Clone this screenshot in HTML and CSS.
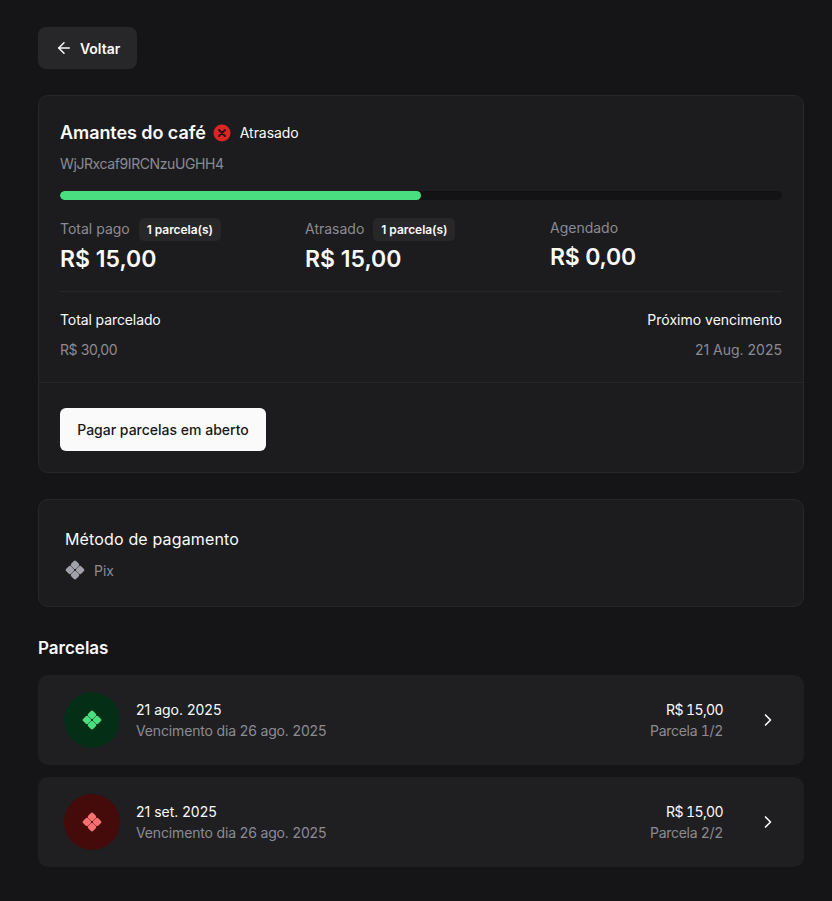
FILE: index.html
```html
<!DOCTYPE html>
<html lang="pt-BR">
<head>
  <meta charset="UTF-8">
  <title>Amantes do café</title>
  <link rel="stylesheet" href="styles.css">
</head>
<body>
<svg class="defs" width="0" height="0">
  <symbol id="pix" viewBox="0 0 20 20">
    <rect x="6.5" y="1.4" width="7" height="7" rx="1.9" transform="rotate(45 10 4.9)"/>
    <rect x="6.5" y="11.6" width="7" height="7" rx="1.9" transform="rotate(45 10 15.1)"/>
    <rect x="1.4" y="6.5" width="7" height="7" rx="1.9" transform="rotate(45 4.9 10)"/>
    <rect x="11.6" y="6.5" width="7" height="7" rx="1.9" transform="rotate(45 15.1 10)"/>
  </symbol>
</svg>
<div class="page">
  <button class="back">
    <svg width="18" height="18" viewBox="0 0 24 24" fill="none" stroke="currentColor" stroke-width="2" stroke-linecap="round" stroke-linejoin="round"><path d="M19 12H5"/><path d="M12 19l-7-7 7-7"/></svg>
    Voltar
  </button>

  <section class="card summary">
    <div class="summary-top">
      <div class="title-row">
        <h1>Amantes do café</h1>
        <svg class="status-icon" width="18" height="18" viewBox="0 0 18 18"><circle cx="9" cy="9" r="8.5" fill="#dc2626"/><path d="M6 6l6 6M12 6l-6 6" stroke="#2a1012" stroke-width="1.9" stroke-linecap="round"/></svg>
        <span class="status">Atrasado</span>
      </div>
      <p class="code">WjJRxcaf9IRCNzuUGHH4</p>
      <div class="progress"><div class="progress-fill" style="width:50%"></div></div>
      <div class="stats">
        <div class="stat">
          <div class="stat-label">Total pago <span class="pill">1 parcela(s)</span></div>
          <div class="stat-value">R$ 15,00</div>
        </div>
        <div class="stat">
          <div class="stat-label">Atrasado <span class="pill">1 parcela(s)</span></div>
          <div class="stat-value">R$ 15,00</div>
        </div>
        <div class="stat">
          <div class="stat-label stat-label-plain">Agendado</div>
          <div class="stat-value stat-value-plain">R$ 0,00</div>
        </div>
      </div>
      <div class="totals">
        <div>
          <div class="totals-label">Total parcelado</div>
          <div class="totals-value tight">R$ 30,00</div>
        </div>
        <div class="right">
          <div class="totals-label">Próximo vencimento</div>
          <div class="totals-value">21 Aug. 2025</div>
        </div>
      </div>
    </div>
    <div class="summary-action">
      <button class="pay">Pagar parcelas em aberto</button>
    </div>
  </section>

  <section class="card method">
    <h2>Método de pagamento</h2>
    <div class="method-row">
      <svg class="method-icon" width="20" height="20"><use href="#pix"/></svg>
      <span>Pix</span>
    </div>
  </section>

  <h3 class="section-title">Parcelas</h3>

  <div class="list">
    <div class="row">
      <div class="row-icon paid">
        <svg width="20" height="20"><use href="#pix"/></svg>
      </div>
      <div class="row-main">
        <div class="row-title">21 ago. 2025</div>
        <div class="row-sub">Vencimento dia 26 ago. 2025</div>
      </div>
      <div class="row-amount">
        <div class="row-title">R$ 15,00</div>
        <div class="row-sub">Parcela 1/2</div>
      </div>
      <svg class="chevron" width="20" height="20" viewBox="0 0 24 24" fill="none" stroke="currentColor" stroke-width="2" stroke-linecap="round" stroke-linejoin="round"><path d="M9 18l6-6-6-6"/></svg>
    </div>
    <div class="row">
      <div class="row-icon late">
        <svg width="20" height="20"><use href="#pix"/></svg>
      </div>
      <div class="row-main">
        <div class="row-title">21 set. 2025</div>
        <div class="row-sub">Vencimento dia 26 ago. 2025</div>
      </div>
      <div class="row-amount">
        <div class="row-title">R$ 15,00</div>
        <div class="row-sub">Parcela 2/2</div>
      </div>
      <svg class="chevron" width="20" height="20" viewBox="0 0 24 24" fill="none" stroke="currentColor" stroke-width="2" stroke-linecap="round" stroke-linejoin="round"><path d="M9 18l6-6-6-6"/></svg>
    </div>
  </div>
</div>
</body>
</html>
```

FILE: styles.css
```css
* { margin: 0; padding: 0; box-sizing: border-box; }
html, body { height: 100%; }
body {
  background: #151517;
  color: #fafafa;
  font-family: Inter, "Liberation Sans", sans-serif;
  font-size: 14px;
  overflow: hidden;
}
button { font-family: inherit; border: 0; cursor: pointer; }
.defs { display: block; height: 0; }

.page { padding: 27px 28px 0 38px; }

.back {
  display: flex;
  align-items: center;
  gap: 7px;
  height: 42px;
  width: 99px;
  padding-left: 17px;
  border-radius: 8px;
  background: #27272a;
  color: #fafafa;
  font-size: 14px;
  font-weight: 600;
  letter-spacing: -0.02px;
}

.card {
  background: #1c1c1e;
  border: 1px solid #27272a;
  border-radius: 10px;
}

.summary { margin-top: 26px; height: 378px; }
.summary-top { padding: 25px 21px 0; height: 287px; border-bottom: 1px solid #27272a; }

.title-row { display: flex; align-items: center; height: 24px; }
.title-row h1 { font-size: 18px; line-height: 24px; font-weight: 600; letter-spacing: -0.07px; }
.status-icon { margin-left: 7px; margin-top: -1px; }
.status { margin-left: 9px; margin-top: -2px; font-size: 14px; letter-spacing: -0.05px; }
.code { margin-top: 9px; font-size: 14px; line-height: 20px; color: #8b8b94; letter-spacing: -0.4px; }

.progress {
  margin-top: 17px;
  height: 9px;
  border-radius: 5px;
  background: #131315;
  overflow: hidden;
}
.progress-fill { height: 100%; border-radius: 5px; background: #4ade80; }

.stats { display: grid; grid-template-columns: 245px 245px 1fr; margin-top: 16px; height: 76px; border-bottom: 1px solid #27272a; }
.stat-label { display: flex; align-items: center; gap: 9px; height: 24px; color: #8b8b94; font-size: 14px; }
.stat-label-plain { height: 22px; }
.pill {
  padding: 0 8px;
  height: 23px;
  margin-top: 2px;
  line-height: 23px;
  border-radius: 5px;
  background: #27272a;
  color: #fafafa;
  font-size: 12px;
  font-weight: 600;
  letter-spacing: -0.05px;
}
.stat-value { margin-top: 3px; font-size: 23px; line-height: 32px; font-weight: 600; }
.stat-value-plain { margin-top: 3px; letter-spacing: -0.2px; }

.totals { display: flex; justify-content: space-between; padding-top: 18px; }
.totals-label { font-size: 14px; line-height: 20px; font-weight: 400; }
.totals-value { margin-top: 10px; font-size: 14px; line-height: 20px; color: #8b8b94; }
.totals-value.tight { letter-spacing: -0.4px; }
.totals > div:first-child .totals-label { letter-spacing: -0.1px; }
.right { text-align: right; }

.summary-action { padding: 25px 21px 0; }
.pay {
  width: 206px;
  height: 43px;
  border-radius: 6px;
  background: #fafafa;
  color: #18181b;
  font-size: 14px;
  font-weight: 500;
}

.method { margin-top: 26px; height: 108px; padding: 27px 26px 0; }
.method h2 { font-size: 16px; line-height: 24px; font-weight: 400; letter-spacing: 0.15px; }
.method-row { display: flex; align-items: center; gap: 9px; margin-top: 9px; color: #8b8b94; font-size: 14px; height: 20px; }
.method-icon { fill: #a1a1aa; }

.section-title { margin-top: 29px; font-size: 17px; line-height: 24px; font-weight: 600; }

.list { display: flex; flex-direction: column; gap: 12px; margin-top: 15px; }
.row {
  display: flex;
  align-items: center;
  height: 90px;
  padding: 0 26px;
  border-radius: 10px;
  background: #1f1f22;
}
.row-icon {
  display: flex;
  align-items: center;
  justify-content: center;
  width: 56px;
  height: 56px;
  border-radius: 50%;
}
.row-icon.paid { background: #052e16; fill: #4ade80; }
.row-icon.late { background: #450a0a; fill: #f87171; }
.row-main { flex: 1; margin-left: 16px; }
.row-title { font-size: 14px; line-height: 21px; font-weight: 400; }
.row-sub { font-size: 14px; line-height: 21px; color: #8b8b94; letter-spacing: -0.15px; }
.row-amount { text-align: right; font-variant-numeric: tabular-nums; }
.row-amount .row-title { letter-spacing: -0.6px; }
.row-amount .row-sub { letter-spacing: -0.3px; }
.chevron { margin-left: 35px; color: #fafafa; }
```
